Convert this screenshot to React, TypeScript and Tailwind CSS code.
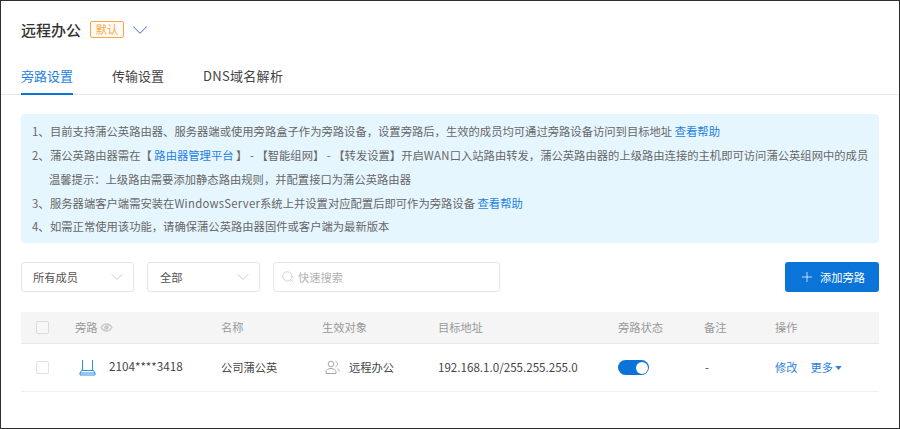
import { ChevronDown, Plus, Search } from "lucide-react";

const font = { fontFamily: '"Noto Sans CJK SC", sans-serif' };
const cols = "grid grid-cols-[54px_146px_101px_116px_180px_86px_71px_104px] items-center";

function Select({ label, className }: { label: string; className: string }) {
  return (
    <div className={`h-[30px] flex items-center justify-between rounded-[3px] border border-[#e6e6e6] pr-[6px] text-[11.25px] text-[#555] ${className}`}>
      <span>{label}</span>
      <ChevronDown className="w-[20px] h-[20px] text-[#c0c0c0]" strokeWidth={1} />
    </div>
  );
}

function Link({ children }: { children: React.ReactNode }) {
  return <span className="text-[#1f7fe0]">{children}</span>;
}

function Num({ children }: { children: React.ReactNode }) {
  return <span className="inline-block w-[18px]">{children}</span>;
}

export default function App() {
  return (
    <div style={font} className="w-[900px] h-[429px] overflow-hidden border border-[#2e2e2e] bg-white text-[#333]">
      {/* Header */}
      <div className="h-[56px] pl-[20px] flex items-center pt-[1px]">
        <span className="text-[15px] font-medium leading-none text-[#333]">远程办公</span>
        <span className="ml-[9px] w-[34px] h-[17px] flex items-center justify-center rounded-[2px] border border-[#f5a84a] bg-[#fffaf3] text-[11.25px] leading-none text-[#f5a84a]">默认</span>
        <ChevronDown className="ml-[3px] w-[26px] h-[26px] text-[#4f86d8]" strokeWidth={0.95} />
      </div>

      {/* Tabs */}
      <div className="h-[38px] pl-[20px] flex gap-[39px] border-b border-[#e8e8e8] text-[13px]">
        <div className="w-[52px] h-[38px] pt-[9px] border-b-2 border-[#0a74d9] text-[#1f7fe0] leading-[20px]">旁路设置</div>
        <div className="pt-[9px] leading-[20px] text-[#444]">传输设置</div>
        <div className="pt-[9px] leading-[20px] text-[#444] tracking-[0.3px]">DNS域名解析</div>
      </div>

      <div className="pl-[20px] pr-[20px]">
        {/* Notice */}
        <div className="mt-[19px] h-[129px] rounded-[4px] bg-[#e6f6ff] pl-[11px] pt-[5px] text-[11.32px] text-[#666] whitespace-nowrap">
          <p className="h-[24px] leading-[24px]"><Num>1、</Num>目前支持蒲公英路由器、服务器端或使用旁路盒子作为旁路设备，设置旁路后，生效的成员均可通过旁路设备访问到目标地址 <Link>查看帮助</Link></p>
          <p className="h-[24px] leading-[24px]"><Num>2、</Num>蒲公英路由器需在【 <Link>路由器管理平台</Link> 】 - 【智能组网】 - 【转发设置】开启<span className="tracking-[0.3px]">WAN</span>口入站路由转发，蒲公英路由器的上级路由连接的主机即可访问蒲公英组网中的成员</p>
          <p className="h-[24px] leading-[24px] pl-[17px]">温馨提示：上级路由需要添加静态路由规则，并配置接口为蒲公英路由器</p>
          <p className="h-[24px] leading-[24px]"><Num>3、</Num>服务器端客户端需安装在<span className="tracking-[0.25px]">WindowsServer</span>系统上并设置对应配置后即可作为旁路设备 <Link>查看帮助</Link></p>
          <p className="h-[23px] leading-[23px]"><Num>4、</Num>如需正常使用该功能，请确保蒲公英路由器固件或客户端为最新版本</p>
        </div>

        {/* Filters */}
        <div className="mt-[19px] flex items-center">
          <Select label="所有成员" className="w-[113px] pl-[11px]" />
          <Select label="全部" className="w-[113px] ml-[13px] pl-[12px]" />
          <div className="ml-[13px] w-[227px] h-[30px] flex items-center gap-[1px] rounded-[3px] border border-[#e6e6e6] pl-[7px] text-[11.25px] text-[#b3b3b3]">
            <Search className="w-[14px] h-[14px] text-[#b5b5b5]" strokeWidth={1} />
            <span className="ml-[2px]">快速搜索</span>
          </div>
          <button className="ml-auto w-[94px] h-[30px] flex items-center justify-center gap-[5px] rounded-[3px] bg-[#0a74d9] text-[11.25px] text-white">
            <Plus className="w-[16px] h-[16px]" strokeWidth={1.1} />
            添加旁路
          </button>
        </div>

        {/* Table */}
        <div className="mt-[20px] text-[11.25px]">
          <div className={`${cols} h-[32px] bg-[#f5f5f5] border-b border-[#e8e8e8] text-[#999]`}>
            <div className="pl-[15px]">
              <div className="w-[13px] h-[13px] border border-[#dcdcdc] rounded-[2px] bg-[#f7f7f7]" />
            </div>
            <div className="flex items-center gap-[2px]">
              旁路
              <svg viewBox="0 0 14 10" className="w-[13px] h-[9px]" fill="none" stroke="#c4c4c4" strokeWidth="1.4">
                <path d="M1 5c1.6-2.6 3.6-4 6-4s4.400 1.400 6 4c-1.600 2.600-3.600 4-6 4s-4.400-1.400-6-4z" />
                <circle cx="7" cy="5" r="1.800" fill="#c4c4c4" />
                <path d="M3 9l8-8" stroke="#c4c4c4" strokeWidth="0.8" />
              </svg>
            </div>
            <div>名称</div>
            <div>生效对象</div>
            <div>目标地址</div>
            <div>旁路状态</div>
            <div>备注</div>
            <div>操作</div>
          </div>

          <div className={`${cols} h-[48px] border-b border-[#f0f0f0] text-[#444]`}>
            <div className="pl-[15px]">
              <div className="w-[13px] h-[13px] border border-[#e2e2e2] rounded-[2px] bg-white" />
            </div>
            <div className="flex items-center gap-[13px] pl-[4px]">
              <svg viewBox="0 0 17 17" className="w-[17px] h-[17px] shrink-0" fill="none" stroke="#2f8fe0" strokeWidth="1">
                <path d="M3.500 1v10.500M13.500 1v10.500" />
                <path d="M2.500 11.500h12l1.500 2.500v2H1v-2z" />
                <path d="M1 14h15" />
              </svg>
              <span className="-mt-[3px] text-[11.7px]">2104****3418</span>
            </div>
            <div>公司蒲公英</div>
            <div className="flex items-center gap-[9px] pl-[3px]">
              <svg viewBox="0 0 15 15" className="w-[15px] h-[15px] shrink-0" fill="none" stroke="#a8a8a8" strokeWidth="1">
                <circle cx="6" cy="4" r="2.800" />
                <path d="M1 13.500v-1.500c0-2 1.800-3.500 5-3.500s5 1.500 5 3.500v1.500z" />
                <path d="M10.500 1.500c1.300.5 2 1.500 2 2.600s-.7 2-1.800 2.500M12.500 8.800c1 .5 1.700 1.500 1.700 2.700" />
              </svg>
              远程办公
            </div>
            <div className="text-[11.6px]">192.168.1.0/255.255.255.0</div>
            <div>
              <div className="w-[31px] h-[15px] rounded-full bg-[#0a74d9] flex items-center justify-end pr-[1.5px]">
                <div className="w-[12px] h-[12px] rounded-full bg-white" />
              </div>
            </div>
            <div className="pl-[1px]">-</div>
            <div className="flex items-center text-[#2f7fdc]">
              修改
              <span className="ml-[13px]">更多</span>
              <svg viewBox="0 0 8 5" className="w-[7px] h-[4px] ml-[2px]" fill="#2f7fdc"><path d="M0 0h8L4 5z" /></svg>
            </div>
          </div>
        </div>
      </div>
    </div>
  );
}
